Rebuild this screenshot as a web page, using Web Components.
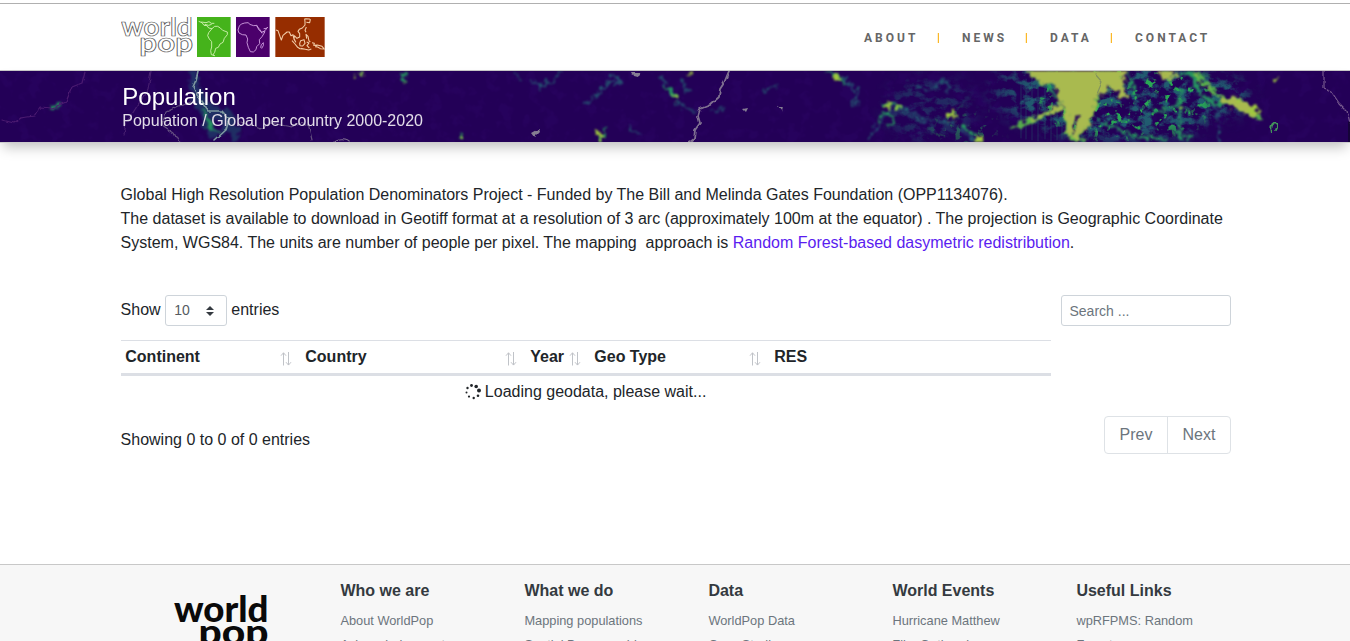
<!DOCTYPE html>
<html lang="en">
<head>
<meta charset="utf-8">
<title>WorldPop :: Population</title>
<style>
html,body{margin:0;height:641px;overflow:hidden;background:#fff;font-family:"Liberation Sans",Arial,sans-serif;font-size:16px;line-height:24px;color:#212529}
</style>
</head>
<body>
<wp-page></wp-page>
<script>
const define = (name, html, setup) => customElements.define(name, class extends HTMLElement {
  connectedCallback() {
    if (this.shadowRoot) return;
    const t = document.createElement('template');
    t.innerHTML = html;
    this.attachShadow({mode: 'open'}).append(t.content.cloneNode(true));
    if (setup) setup(this, this.shadowRoot);
  }
});

define('wp-logo', `
<style>:host{display:block;width:205px;height:41px}svg{display:block}text{font-family:Lato,sans-serif;font-weight:700}</style>
<svg width="205" height="41" viewBox="33 51 615 123" fill="none">
  <g font-size="78" fill="#fff" stroke="#555" stroke-width="2.200">
    <text x="34" y="108" textLength="214" lengthAdjust="spacingAndGlyphs">world</text>
    <text x="88" y="155" textLength="161" lengthAdjust="spacingAndGlyphs">pop</text>
  </g>
  <path fill="#45b31b" d="M261 51h101v120H261z"/><path fill="#4b006b" d="M378 51h101v120H378z"/><path fill="#962d00" d="M496 51h148v120H496z"/>
  <g stroke-linejoin="round" stroke-width="2.6">
  <g stroke="#d8f5b8"><path d="M266 64l10 4 6 8 9 1 5 7 10 2M274 66l14 2 9-3 7 5 9 0M284 73l12 3 9-3M306 86l8-7 9 0 8 5 7 7 14 5 0 8-9 11-4 12-9 5-5 10-8 3-3 12-5 7 5 3-10-3-2-12 3-11 0-16-7-8-5-10 3-9z"/></g>
  <path stroke="#d7a7e6" d="M394 72l10-3 11-1 4 5 12 4 10-1 5 13 9 7 10-1-9 15-8 9 1 12-9 9-2 9-8 7-9-1-6-13-4-14 2-11-5-12-11-1-10-5-3-9 4-12zM440 78l9 10 7 12M461 86l9-1 3-4-7 10-8 5M454 134l6-6 0 9-5 8-3-3z"/>
  <g stroke="#f2cda8" stroke-width="3.200"><path d="M498 90l6 2 3 9 5 14 2 5 5-14 12-10 7 0 5 11 6-3 2 10 6 12-5-8 1-11 8 8 8-4 0-10-5-7 4-6 9-4 8-9 0-10-1-8 4-1 10 1 3 2-2 9-10-1M589 81l-4 10 3 6M546 122l9 10 8 10 7 4 17 2M569 130l3-8 10-3 3 11-7 8-8-1zM590 116l-2-13 6 6 3 14 4 2M590 126l7 3-6 8 7 7M606 128l7 2-2 6 10 1M612 136l10-1 14 4 7 8-12-1-8-5-8-1M572 145l24 5 8-3"/></g>
  </g>
</svg>`);

define('wp-nav', `
<style>:host{display:grid;grid-template-columns:74px 88px 85px 120px;align-items:center;font:700 12px/18px Roboto,sans-serif;letter-spacing:3px;color:#666}
a{display:block;white-space:nowrap}
a+a{position:relative;padding-left:24px}
a+a::before{content:"";position:absolute;left:0;top:4px;width:1px;height:10px;background:#fbb829;box-shadow:-1px 0 #fef0d0}</style>
<a>ABOUT</a><a>NEWS</a><a>DATA</a><a>CONTACT</a>`);

define('wp-header', `
<style>:host{display:block;box-sizing:border-box;height:71px;padding-top:3px}
.bar{box-sizing:border-box;height:68px;border-top:1px solid #b0b0b0;border-bottom:1px solid #c9c9c9}
.in{box-sizing:border-box;width:1140px;height:66px;margin:auto;padding:0 0 0 16px;display:flex;justify-content:space-between}
wp-logo{margin-top:13px}wp-nav{height:68px;padding-right:14px}</style>
<div class="bar"><div class="in"><wp-logo></wp-logo><wp-nav></wp-nav></div></div>`);

/* Night-light style population raster behind the page title */
define('wp-raster', `
<style>:host{display:block;width:1350px;height:71px;background:#230057}svg{display:block}filter{color-interpolation-filters:sRGB}</style>
<svg width="1350" height="71" viewBox="0 0 1350 71" fill="none" stroke-linecap="round" stroke-linejoin="round">
<defs>
 <filter id="r" x="0" y="0" width="1350" height="71" filterUnits="userSpaceOnUse"><feTurbulence type="fractalNoise" baseFrequency=".16" numOctaves="3" seed="4"/><feDisplacementMap in="SourceGraphic" scale="13" xChannelSelector="R" yChannelSelector="G"/><feGaussianBlur stdDeviation=".8"/></filter>
 <filter id="w" x="0" y="0" width="1350" height="71" filterUnits="userSpaceOnUse"><feTurbulence type="fractalNoise" baseFrequency=".12" numOctaves="2" seed="8"/><feDisplacementMap in="SourceGraphic" scale="4" xChannelSelector="R" yChannelSelector="G"/><feGaussianBlur stdDeviation=".35"/></filter>
 <filter id="n" x="0" y="0" width="1350" height="71" filterUnits="userSpaceOnUse"><feTurbulence type="fractalNoise" baseFrequency=".085 .11" numOctaves="4" seed="23"/><feColorMatrix values="0 0 0 0 .13  0 0 0 0 .36  0 0 0 0 .44  4 0 0 0 -1.800"/></filter>
 <filter id="g" x="0" y="0" width="1350" height="71" filterUnits="userSpaceOnUse"><feTurbulence type="fractalNoise" baseFrequency=".13" numOctaves="3" seed="31"/><feColorMatrix values="0 0 0 0 .16  0 0 0 0 .66  0 0 0 0 .33  8 0 0 0 -4.800"/></filter>
 <filter id="p" x="0" y="0" width="1350" height="71" filterUnits="userSpaceOnUse"><feTurbulence type="fractalNoise" baseFrequency=".07" numOctaves="3" seed="12"/><feColorMatrix values="0 0 0 0 .19  0 0 0 0 .03  0 0 0 0 .42  5 0 0 0 -2.6"/></filter>
 <filter id="b" x="-20%" y="-40%" width="140%" height="180%"><feGaussianBlur stdDeviation="8"/></filter>
 <mask id="m"><g filter="url(#b)" fill="#fff"><ellipse cx="1120" cy="28" rx="105" ry="42"/><ellipse cx="1200" cy="25" rx="50" ry="24"/><ellipse cx="930" cy="38" rx="45" ry="34" opacity=".45"/><ellipse cx="1030" cy="20" rx="40" ry="30" opacity=".7"/></g></mask>
 <mask id="m2"><g filter="url(#b)" fill="#fff"><ellipse cx="1125" cy="28" rx="90" ry="42"/><ellipse cx="965" cy="58" rx="35" ry="18" opacity=".5"/></g></mask>
</defs>
<rect width="1350" height="71" filter="url(#p)" opacity=".3"/>
<g mask="url(#m)"><rect width="1350" height="71" filter="url(#n)"/></g>
<g mask="url(#m2)"><rect width="1350" height="71" filter="url(#g)"/></g>
<g stroke="#26606f" stroke-width=".8" opacity=".5"><path d="M1021 12v55M1026 8v60M1032 7v62M1038 12v58M1045 10v58M1051 33v37M1057 35v34M1062 35v33"/></g>
<g filter="url(#r)">
 <path d="M596 27l5-9 8-7 8-8M516 3l5 7M527 9l8 2 4 4 8-1 8-7 8-7M587 32l4-7M618 5v10M662 6l10 16 4 8 10 8 10 3M683 10l5 10M714 40l10-3M765 19l15-5M835 2l12 8 12 14-7 12M868 69l7-12 12-12 6-12 7 5M630 56l8 6M900 35l15 8 15 7 22 2 20 15 10 4M915 15l15 5 15-12 4 13M900 40l25 12M1219 70v-25l-8-14" stroke="#24717a" stroke-width="2" opacity=".75"/>
 <path d="M193 0l2 15 8 16 12 13 16 7 5 15M193 20l10 18 10 25M210 35l20 10-5 15" stroke="#1b6574" stroke-width="8" opacity=".45"/>
 <path d="M204 40l8 18M208 56l12 5M52 37l6-2M359 1l1 5M403 4l3 7M461 66v-4M600 68l5-10M668 16l8 10M828 0l9 5 10 9M878 48l8-7 8 7-4 7M885 33l14 2M962 55l14 10M1030 1l18 16 8 10 10 3M1127 4l9 20M1178 5l14-5M1190 0l8 22M1195 5l5 18 16 10 22-3 18 17M1180 20v25l1 25M1152 40l8-1 16-5 12 6M1100 50l14 6 20 10M1135 65l30 3M1175 60l16 9" stroke="#25945f" stroke-width="2.800"/>
 <path d="M1063 36l-34 14-15 6M1069 32l-1 31 14 6M1096 26l-6 18-8 14-7 11M1195 3l25 24 22 8 18 13" stroke="#59b74a" stroke-width="4"/>
</g>
<g filter="url(#r)" fill="#a9ba4f">
 <path d="M1021-6l12 15 12 4 10 2 4 12 7 10 4 24 6-16 8 0 2 15 7-15 3-16 5-7 10-5 12 11 6-2-6-13 1-7 8-9-8-8z"/>
 <path d="M1156-4l6 11 11 1 6-12zM1191-5l10 16 13 13 7 4 10-1 13 3 15 14-4 3-17-9-17-6-10-12-14-14z"/>
 <path d="M1066 30l1 36 5-1 1-35zM1062 33l-18 8-14 7-3 3 12-4 25-8zM1078 48l10-5-5 16-6 12-3-6z"/>
 <g fill="#9fc93e"><circle cx="359" cy="4" r="3.2"/><circle cx="405" cy="10" r="1.6"/><circle cx="461" cy="65" r="2"/><circle cx="600" cy="65" r="3.4"/><circle cx="676" cy="26" r="2.5"/><circle cx="690" cy="3" r="2"/><circle cx="837" cy="6" r="3.5"/><circle cx="889" cy="34" r="3"/><circle cx="897" cy="35" r="2.5"/><circle cx="952" cy="45" r="4.2"/><circle cx="979" cy="69" r="3.5"/><circle cx="1254" cy="39" r="4.5"/><circle cx="1239" cy="29" r="3.5"/><circle cx="1181" cy="37" r="3"/><circle cx="1276" cy="10" r="1.8"/></g>
</g>
<path d="M1272 62q-2-8 2-10 5 2 2 7" stroke="#43935a" stroke-width="2" filter="url(#w)"/>
<g filter="url(#w)" stroke="#7f7090" stroke-width="1.2">
 <path d="M729 0l-5 12-4 6-1 8-9 8-10 4-2 7 2 7-5 7-1 9-4 3-6 3" stroke-width="1.8"/>
 <path d="M198 0l-2 9-3 7 5 10 10 14 14 0 7 8-3 10-12 11" stroke="#7e99a0" stroke-width="1.6"/><path d="M195 31l-16 4-13 6-4 13 12 8 4 8 6 4M241 51l11 4 9 3 9-6 22 4 10-4 7 4 3 13" opacity=".7"/>
 <path d="M1324 0l0 17 7 3 8 12 8 8 3 12" stroke="#76588d"/>
 <path d="M85 0l-3 12-10 4-6 15-14 6-12-1-6 9-13 2-7 5-12-3" stroke="#4b1a70"/>
 <path d="M151 0l-3 18-14 22-8 12-2 12" stroke="#482070"/><path d="M1095 3l7 8-5 12" stroke="#82935d"/>
 <path d="M334 72a8 5 0 0 1 15 0"/>
</g>
<g filter="url(#w)" fill="#857d92"><path d="M632 1h9l-3 5-4-1zM532 62l7-4 1 3-5 5zM743 38l5-1-2 4zM776 34l4 3 3-1-1 5zM669 52l2 2z"/></g>
<path d="M1349 51v20" stroke="#09061a"/>
</svg>`);

define('wp-banner', `
<style>:host{display:grid;height:71px;box-shadow:0 7px 12px -3px rgba(0,0,0,.25);border-bottom:1px solid #ccc;margin-bottom:-1px}
wp-raster,.t{grid-area:1/1}.t{position:relative;width:1140px;margin:0 auto;box-sizing:border-box;padding:12px 17.300px;color:#fff}
h1{margin:0;font:400 24px/28px "Liberation Sans",sans-serif}.s{line-height:20px;color:#e2dce8}</style>
<wp-raster></wp-raster><div class="t"><h1>Population</h1><div class="s">Population / Global per country 2000-2020</div></div>`);

define('wp-controls', `
<style>:host{display:flex;justify-content:space-between;height:31px}
.l{display:flex;align-items:center;gap:4px;line-height:30px}.l span{height:31px}.l span+div+span{margin-left:.7px}
.sel,.q{box-sizing:border-box;height:31px;border:1px solid #ced4da;border-radius:3px;font-size:14px;line-height:29px}
.sel{width:62px;padding:0 12px 0 8.500px;display:flex;justify-content:space-between;align-items:center;color:#555b62}
.q{width:170px;padding:1px 7.500px;color:#6c757d}</style>
<div class="l"><span>Show</span><div class="sel">10<svg width="8" height="10" viewBox="0 0 8 10" fill="#343a40"><path d="M4 0l4 4H0zM4 10l4-4H0z"/></svg></div><span>entries</span></div>
<div class="q">Search ...</div>`);

define('wp-th', `
<style>:host{display:flex;justify-content:space-between;padding:0 9px 0 4.700px;font-weight:700;line-height:32px}
svg{margin-top:11px}:host([plain]) svg{display:none}</style>
<slot></slot><svg width="12" height="14" viewBox="0 0 12 14" fill="none" stroke="#c0c3c8" stroke-width="1"><path d="M3.500 13.500V.8M1 3.700L3.500 .8 6 3.700M8.500 0v13M6 10.200l2.500 2.900L11 10.200"/></svg>`);

define('wp-spinner', `
<style>:host{display:inline-block;width:16px;height:16px}svg{display:block}</style>
<svg width="16" height="16" viewBox="0 0 16 16" fill="#212529"><circle cx="14" cy="6.500" r="2"/><circle cx="11.200" cy="2.500" r="1.800"/><circle cx="6.500" cy="1.500" r="1.400"/><circle cx="2.500" cy="4" r="1.200"/><circle cx="1.500" cy="8.500" r="1"/><circle cx="4" cy="12.600" r="1.100"/><circle cx="8.700" cy="14" r="1.200"/><circle cx="13" cy="11.700" r="1.300"/></svg>`);

define('wp-table', `
<style>:host{display:block;width:930px}
.h{display:grid;grid-template-columns:180px 225px 64px 180px 1fr;border-top:1px solid #dcdfe5;border-bottom:3px solid #dcdfe5;height:32px}
.b{display:flex;justify-content:center;align-items:center;gap:4px;height:32px}</style>
<div class="h"><wp-th>Continent</wp-th><wp-th>Country</wp-th><wp-th>Year</wp-th><wp-th>Geo Type</wp-th><wp-th plain>RES</wp-th></div>
<div class="b"><wp-spinner></wp-spinner><span>Loading geodata, please wait...</span></div>`);

define('wp-pager', `
<style>:host{display:flex;justify-content:space-between;height:38px}
.i{padding-top:12px}.p{display:flex;box-sizing:border-box;width:127px;height:38px;border:1px solid #dee2e6;border-radius:4px;color:#6c757d}
.p span{flex:1;text-align:center;line-height:36px}.p span+span{border-left:1px solid #dee2e6}</style>
<div class="i">Showing 0 to 0 of 0 entries</div><div class="p"><span>Prev</span><span>Next</span></div>`);

define('wp-main', `
<style>:host{display:block;box-sizing:border-box;width:1111px;height:422px;margin-left:120px;padding:41px 0 0 .6px}
p{margin:0;width:1112px}a{color:#5a1cf0}wp-controls{margin-top:40px}wp-table{margin-top:14px}wp-pager{margin-top:8px}</style>
<p>Global High Resolution Population Denominators Project - Funded by The Bill and Melinda Gates Foundation (OPP1134076).<br>The dataset is available to download in Geotiff format at a resolution of 3 arc (approximately 100m at the equator) . The projection is Geographic Coordinate System, WGS84. The units are number of people per pixel. The mapping &nbsp;approach is <a>Random Forest-based dasymetric redistribution</a>.</p>
<wp-controls></wp-controls><wp-table></wp-table><wp-pager></wp-pager>`);

define('wp-links', `
<style>:host{display:block;width:184px;white-space:nowrap}h4{margin:0 0 6px;font:700 16px/24px "Liberation Sans",sans-serif;color:#343a40}
::slotted(a){display:block;font-size:12.800px;line-height:24px;color:#6c757d}</style><h4></h4><slot></slot>`,
(host, root) => { root.querySelector('h4').textContent = host.getAttribute('heading'); });

define('wp-footer', `
<style>:host{display:block;box-sizing:border-box;height:77px;overflow:hidden;background:#f7f7f7;border-top:1px solid #c8c8c8}
.in{display:flex;padding:14px 0 0 170px}.logo{display:block;width:170px;height:62px;flex:none;margin-right:.4px}text{font-family:Lato,sans-serif;font-weight:900}</style>
<div class="in"><svg class="logo" viewBox="170 579 170 62" font-size="36.500" fill="#0a0a0a"><text x="174" y="621.500" textLength="94.500" lengthAdjust="spacingAndGlyphs">world</text><text x="198.500" y="644.500" textLength="70" lengthAdjust="spacingAndGlyphs">pop</text></svg>
<wp-links heading="Who we are"><a>About WorldPop</a><a>Acknowledgement</a></wp-links>
<wp-links heading="What we do"><a>Mapping populations</a><a>Spatial Demographics</a></wp-links>
<wp-links heading="Data"><a>WorldPop Data</a><a>Case Studies</a></wp-links>
<wp-links heading="World Events"><a>Hurricane Matthew</a><a>Zika Outbreak</a></wp-links>
<wp-links heading="Useful Links"><a>wpRFPMS: Random</a><a>Forest</a></wp-links></div>`);

define('wp-page', `
<style>:host{display:block;width:1350px;height:641px;overflow:hidden}</style>
<wp-header></wp-header><wp-banner></wp-banner><wp-main></wp-main><wp-footer></wp-footer>`);
</script>
</body>
</html>
